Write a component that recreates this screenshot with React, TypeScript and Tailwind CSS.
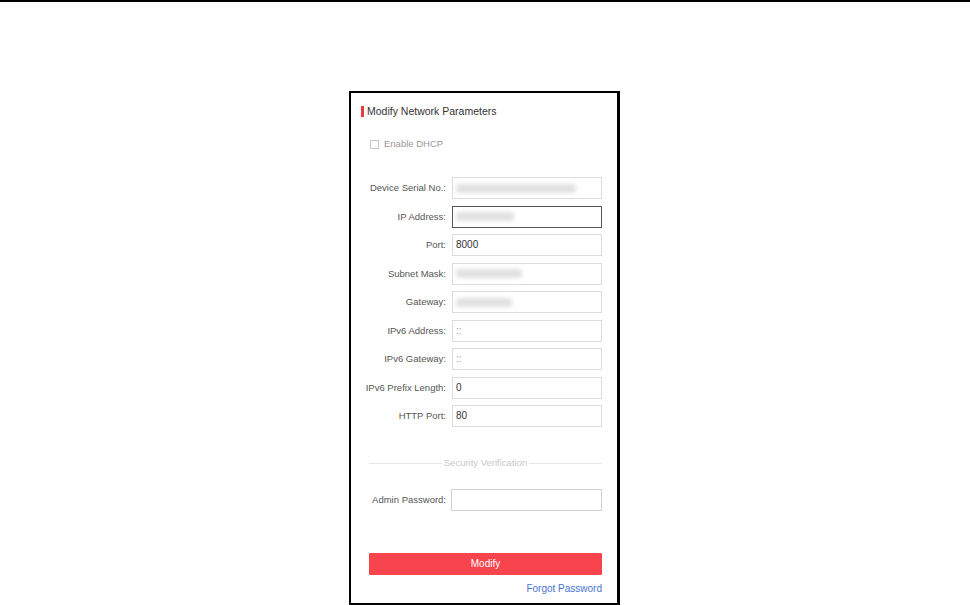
import React from 'react';

const rows = [
  { label: 'Device Serial No.:', blur: 120 },
  { label: 'IP Address:', blur: 58, focused: true },
  { label: 'Port:', value: '8000' },
  { label: 'Subnet Mask:', blur: 66 },
  { label: 'Gateway:', blur: 56 },
  { label: 'IPv6 Address:', value: '::', faint: true },
  { label: 'IPv6 Gateway:', value: '::', faint: true },
  { label: 'IPv6 Prefix Length:', value: '0' },
  { label: 'HTTP Port:', value: '80' },
];

const Label: React.FC<{ text: string }> = ({ text }) => (
  <div className="w-[77px] shrink-0 flex justify-end">
    <span className="text-[9.5px] text-[#555] leading-none whitespace-nowrap">{text}</span>
  </div>
);

const App: React.FC = () => {
  return (
    <div className="w-[970px] h-[605px] bg-white border-t-2 border-black overflow-hidden font-['Liberation_Sans',Arial,sans-serif]">
      <div className="ml-[349px] mt-[89px] w-[271px] h-[514px] border-t-2 border-l-2 border-b-2 border-r-[3px] border-black flex flex-col pl-[18px] pr-[15px]">
        {/* title */}
        <div className="mt-[11px] -ml-[8px] flex items-center h-[14px] gap-[3px]">
          <div className="w-[3px] h-[11px] bg-[#ec3a44]" />
          <span className="text-[10.5px] text-[#333] leading-none">Modify Network Parameters</span>
        </div>

        <div className="mt-[21px] ml-[1px] flex items-center h-[10px] gap-[5px]">
          <div className="w-[9px] h-[9px] border border-[#c8c8c8] bg-white" />
          <span className="text-[9.5px] text-[#999] leading-none">Enable DHCP</span>
        </div>

        {/* fields */}
        <div className="mt-[28px] flex flex-col gap-y-[6.5px]">
          {rows.map((r, i) => (
            <div key={i} className="flex items-center h-[22px]">
              <Label text={r.label} />
              <div
                className={`ml-[6px] w-[150px] h-[22px] border bg-white flex items-center px-[3px] ${
                  r.focused ? 'border-[#555]' : 'border-[#dcdcdc]'
                }`}
              >
                {r.blur ? (
                  <div className="h-[9px] bg-[#e0e0e0] blur-[2px] rounded-sm" style={{ width: r.blur }} />
                ) : (
                  <span className={`text-[10px] leading-none ${r.faint ? 'text-[#8a9ab8]' : 'text-[#333]'}`}>{r.value}</span>
                )}
              </div>
            </div>
          ))}
        </div>

        {/* divider */}
        <div className="mt-[31px] flex items-center h-[10px]">
          <div className="flex-1 h-px bg-[#e6e6e6]" />
          <span className="px-[2px] text-[9.5px] text-[#c8c8c8] leading-none">Security Verification</span>
          <div className="flex-1 h-px bg-[#e6e6e6]" />
        </div>

        <div className="mt-[21px] flex items-center h-[22px]">
          <Label text="Admin Password:" />
          <div className="ml-[5px] w-[151px] h-[22px] border border-[#d0d0d0] bg-white" />
        </div>

        <button className="mt-[42px] h-[22px] w-full bg-[#f7444d] rounded-[1px] text-white text-[10px] leading-none flex items-center justify-center">
          Modify
        </button>

        <div className="mt-[9px] flex justify-end">
          <span className="text-[10px] text-[#4a72d6] leading-none">Forgot Password</span>
        </div>
      </div>
    </div>
  );
};

export default App;
